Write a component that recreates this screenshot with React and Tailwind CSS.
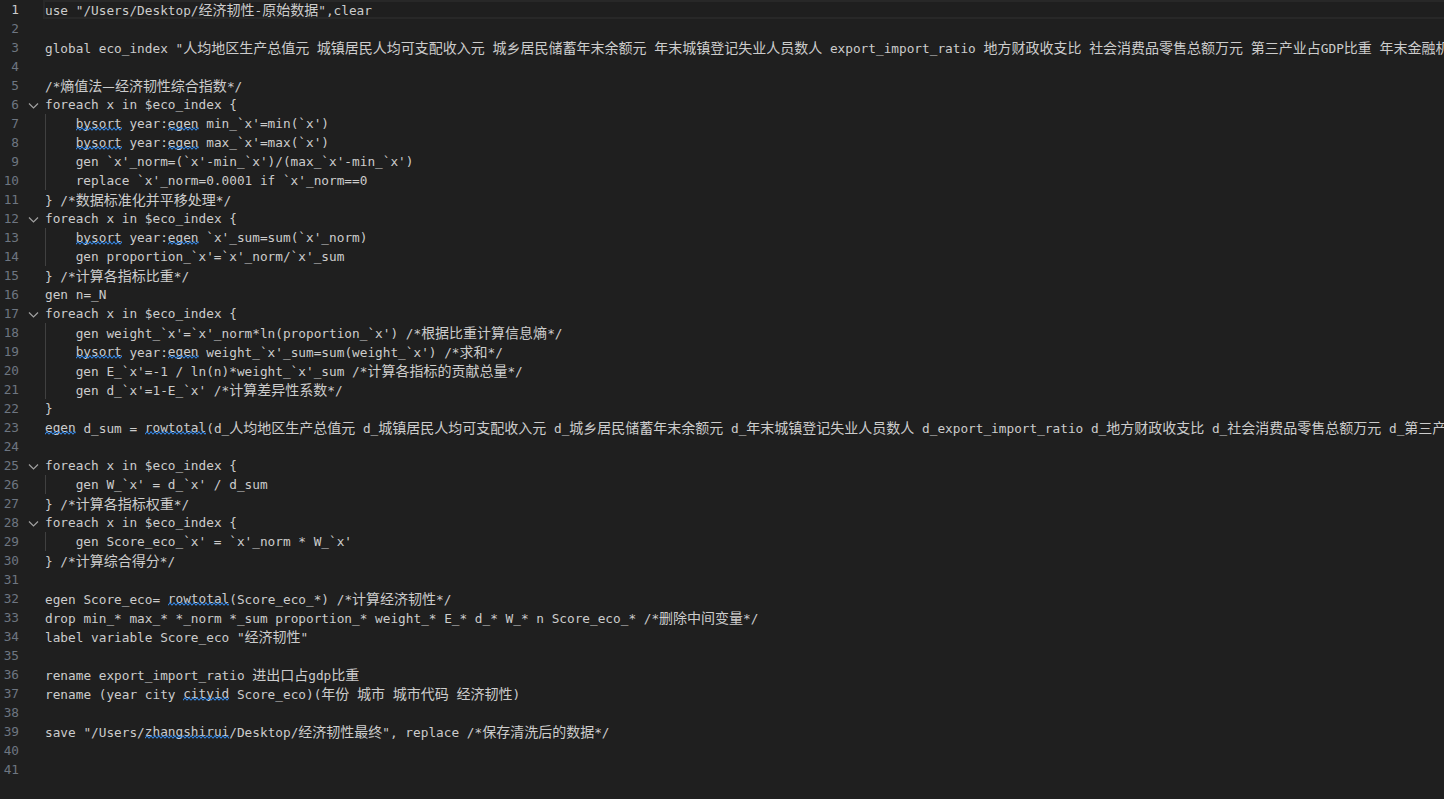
import React from 'react';

// ~word~ marks a word with a wavy squiggle; lines starting with 4 spaces get an indent guide
const lines = [
    { t: "use \"/Users/Desktop/经济韧性-原始数据\",clear" },
    { t: "" },
    { t: "global eco_index \"人均地区生产总值元 城镇居民人均可支配收入元 城乡居民储蓄年末余额元 年末城镇登记失业人员数人 export_import_ratio 地方财政收支比 社会消费品零售总额万元 第三产业占GDP比重 年末金融机构存款余额元\"" },
    { t: "" },
    { t: "/*熵值法—经济韧性综合指数*/" },
    { t: "foreach x in $eco_index {", fold: true },
    { t: "    ~bysort~ year:~egen~ min_`x'=min(`x')" },
    { t: "    ~bysort~ year:~egen~ max_`x'=max(`x')" },
    { t: "    gen `x'_norm=(`x'-min_`x')/(max_`x'-min_`x')" },
    { t: "    replace `x'_norm=0.0001 if `x'_norm==0" },
    { t: "} /*数据标准化并平移处理*/" },
    { t: "foreach x in $eco_index {", fold: true },
    { t: "    ~bysort~ year:~egen~ `x'_sum=sum(`x'_norm)" },
    { t: "    gen proportion_`x'=`x'_norm/`x'_sum" },
    { t: "} /*计算各指标比重*/" },
    { t: "gen n=_N" },
    { t: "foreach x in $eco_index {", fold: true },
    { t: "    gen weight_`x'=`x'_norm*ln(proportion_`x') /*根据比重计算信息熵*/" },
    { t: "    ~bysort~ year:~egen~ weight_`x'_sum=sum(weight_`x') /*求和*/" },
    { t: "    gen E_`x'=-1 / ln(n)*weight_`x'_sum /*计算各指标的贡献总量*/" },
    { t: "    gen d_`x'=1-E_`x' /*计算差异性系数*/" },
    { t: "}" },
    { t: "~egen~ d_sum = ~rowtotal~(d_人均地区生产总值元 d_城镇居民人均可支配收入元 d_城乡居民储蓄年末余额元 d_年末城镇登记失业人员数人 d_export_import_ratio d_地方财政收支比 d_社会消费品零售总额万元 d_第三产业占GDP比重 d_年末金融机构存款余额元)" },
    { t: "" },
    { t: "foreach x in $eco_index {", fold: true },
    { t: "    gen W_`x' = d_`x' / d_sum" },
    { t: "} /*计算各指标权重*/" },
    { t: "foreach x in $eco_index {", fold: true },
    { t: "    gen Score_eco_`x' = `x'_norm * W_`x'" },
    { t: "} /*计算综合得分*/" },
    { t: "" },
    { t: "egen Score_eco= ~rowtotal~(Score_eco_*) /*计算经济韧性*/" },
    { t: "drop min_* max_* *_norm *_sum proportion_* weight_* E_* d_* W_* n Score_eco_* /*删除中间变量*/" },
    { t: "label variable Score_eco \"经济韧性\"" },
    { t: "" },
    { t: "rename export_import_ratio 进出口占gdp比重" },
    { t: "rename (year city ~cityid~ Score_eco)(年份 城市 城市代码 经济韧性)" },
    { t: "" },
    { t: "save \"/Users/~zhangshirui~/Desktop/经济韧性最终\", replace /*保存清洗后的数据*/" },
    { t: "" },
    { t: "" },
];

const cjk = /([\u2014\u3000-\u9fff\uff00-\uffef]+)/;

const withCjk = (text, key) =>
    text.split(cjk).map((part, i) =>
        cjk.test(part) ? (
            <span key={`${key}-${i}`} className="font-['Noto_Sans_CJK_SC',sans-serif] text-[14px]">
                {part}
            </span>
        ) : (
            <React.Fragment key={`${key}-${i}`}>{part}</React.Fragment>
        )
    );

const Squiggle = ({ children }) => (
    <span className="relative inline-block h-[19px] align-top">
        {children}
        <svg className="absolute left-0 top-[13px] w-full h-[4px]" preserveAspectRatio="none">
            <defs>
                <pattern id="sq" width="4" height="4" patternUnits="userSpaceOnUse">
                    <path d="M0 3.5L2 0.5L4 3.5" stroke="#3794ff" strokeWidth="1" fill="none" />
                </pattern>
            </defs>
            <rect width="100%" height="4" fill="url(#sq)" />
        </svg>
    </span>
);

const renderCode = (text) =>
    text.split('~').map((part, i) =>
        i % 2 === 1 ? <Squiggle key={i}>{withCjk(part, i)}</Squiggle> : withCjk(part, i)
    );

const Chevron = () => (
    <svg width="16" height="16" viewBox="0 0 16 16" fill="none">
        <path d="M4 6.5L8.5 11L13 6.5" stroke="#a0a0a0" strokeWidth="1.2" />
    </svg>
);

export default function App() {
    return (
        <div className="w-[1444px] h-[799px] bg-[#1f1f1f] overflow-hidden font-['DejaVu_Sans_Mono',monospace] text-[12.75px] text-[#cccccc]">
            {lines.map((line, idx) => {
                const indented = line.t.startsWith('    ');
                const body = indented ? line.t.slice(4) : line.t;
                const current = idx === 0;
                return (
                    <div key={idx} className="flex h-[19px] leading-[19px]">
                        <div
                            className={`w-[19px] shrink-0 text-right ${current ? 'text-[#cccccc]' : 'text-[#6e7681]'}`}
                        >
                            {idx + 1}
                        </div>
                        <div className="w-[24px] shrink-0 flex items-center pl-[6px]">
                            {line.fold && <Chevron />}
                        </div>
                        <div
                            className={`flex-1 whitespace-pre overflow-hidden ${
                                current ? 'border-y-2 border-l-2 border-[#282828] leading-[15px]' : 'pl-[2px]'
                            }`}
                        >
                            {indented && (
                                <span className="inline-block w-[30.7px] h-[19px] border-l border-[#404040] align-top" />
                            )}
                            {renderCode(body)}
                        </div>
                    </div>
                );
            })}
        </div>
    );
}
